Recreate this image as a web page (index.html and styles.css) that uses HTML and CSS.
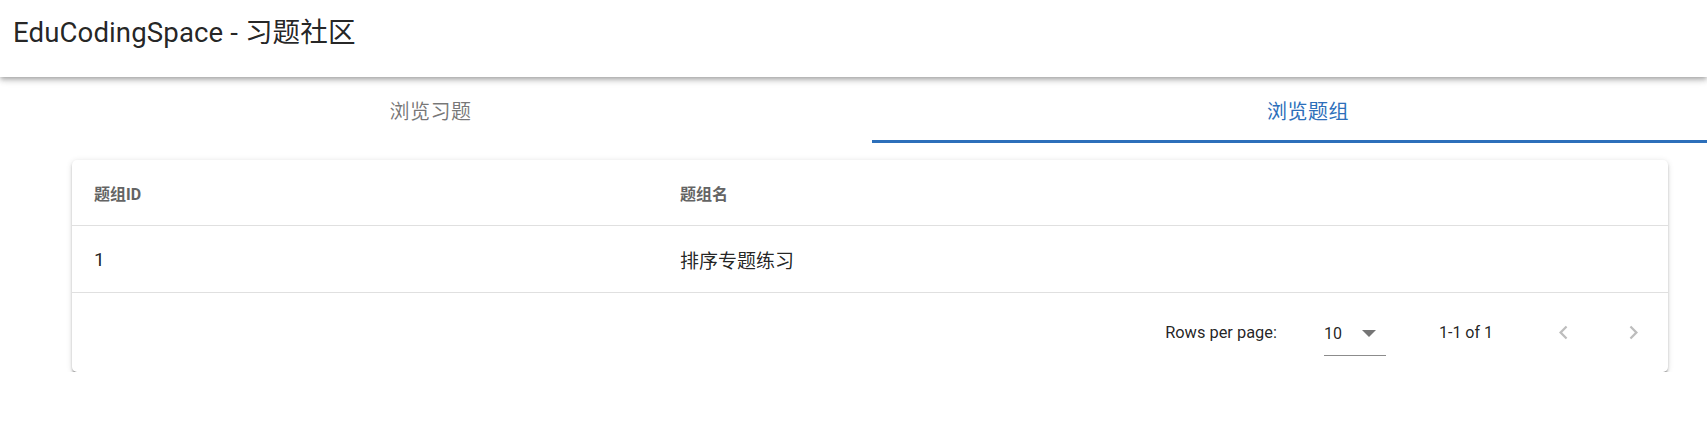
FILE: index.html
```html
<!DOCTYPE html>
<html lang="zh-CN">
<head>
<meta charset="utf-8">
<title>EduCodingSpace - 习题社区</title>
<link rel="stylesheet" href="styles.css">
</head>
<body>
<header class="appbar">
  <h1 class="title">EduCodingSpace - 习题社区</h1>
</header>
<main class="page">
  <nav class="tabs">
    <div class="tab first">浏览习题</div>
    <div class="tab active">浏览题组</div>
  </nav>
  <section class="card">
    <div class="row head">
      <div class="cell c1">题组ID</div>
      <div class="cell c2">题组名</div>
    </div>
    <div class="row body">
      <div class="cell c1">1</div>
      <div class="cell c2">排序专题练习</div>
    </div>
    <div class="footer">
      <span class="label">Rows per page:</span>
      <div class="select">
        <span class="value">10</span>
        <svg class="caret" viewBox="0 0 14 7" width="14" height="7"><path d="M0 0L7 7L14 0Z" fill="currentColor"/></svg>
      </div>
      <span class="range">1-1 of 1</span>
      <button class="nav prev" disabled>
        <svg viewBox="0 0 24 24" width="27" height="27"><path d="M15.41 16.59L10.83 12l4.58-4.59L14 6l-6 6 6 6 1.41-1.41z" fill="currentColor"/></svg>
      </button>
      <button class="nav next" disabled>
        <svg viewBox="0 0 24 24" width="27" height="27"><path d="M8.59 16.59L13.17 12 8.59 7.41 10 6l6 6-6 6-1.41-1.41z" fill="currentColor"/></svg>
      </button>
    </div>
  </section>
</main>
</body>
</html>
```

FILE: styles.css
```css
html, body {
  margin: 0;
  padding: 0;
  background: #ffffff;
  overflow: hidden;
}

body {
  font-family: Roboto, "Noto Sans CJK SC", "Noto Sans", sans-serif;
  color: rgba(0, 0, 0, 0.87);
}

.appbar {
  position: relative;
  z-index: 2;
  box-sizing: border-box;
  height: 77px;
  padding-bottom: 17px;
  display: flex;
  align-items: center;
  background: #ffffff;
  box-shadow: 0 2px 4px -1px rgba(0, 0, 0, 0.2), 0 4px 5px 0 rgba(0, 0, 0, 0.14), 0 1px 10px 0 rgba(0, 0, 0, 0.12);
}

.title {
  margin: 0;
  padding-left: 13px;
  font-size: 27.6px;
  font-weight: 400;
  color: rgba(0, 0, 0, 0.87);
  letter-spacing: 0.1px;
}

.page {
  width: 1744px;
}

.tabs {
  display: grid;
  grid-template-columns: 1fr 1fr;
  height: 66px;
}

.tab {
  display: flex;
  align-items: center;
  justify-content: center;
  font-size: 20px;
  letter-spacing: 0.5px;
  color: rgba(0, 0, 0, 0.54);
}

.tab.first {
  padding-right: 11px;
}

.tab.active {
  color: #2d6fba;
  box-shadow: inset 0 -3px 0 #2d6fba;
}

.card {
  margin: 17px 0 0 72px;
  width: 1596px;
  border-radius: 5px;
  background: #ffffff;
  box-shadow: 0 3px 2px -1px rgba(0, 0, 0, 0.28), 0 2px 3px 0 rgba(0, 0, 0, 0.16), 0 1px 6px 0 rgba(0, 0, 0, 0.12);
}

.row {
  display: flex;
  border-bottom: 1px solid #e0e0e0;
}

.row.head {
  height: 65px;
}

.row.body {
  height: 66px;
}

.cell {
  display: flex;
  align-items: center;
  box-sizing: border-box;
  padding-left: 22px;
}

.c1 {
  width: 586px;
}

.c2 {
  flex: 1;
}

.head .cell {
  font-size: 16px;
  font-weight: 700;
  color: #646464;
}

.body .cell {
  font-size: 19px;
  color: rgba(0, 0, 0, 0.87);
}

.footer {
  height: 79px;
  display: flex;
  align-items: center;
  justify-content: flex-end;
  padding-right: 11px;
  font-size: 16px;
  color: rgba(0, 0, 0, 0.87);
}

.label {
  margin-right: 47px;
  font-size: 16.4px;
}

.select {
  align-self: flex-start;
  margin-top: 18px;
  box-sizing: border-box;
  width: 62px;
  height: 45px;
  display: flex;
  align-items: center;
  border-bottom: 1px solid #8c8c8c;
}

.value {
  font-size: 16px;
}

.caret {
  margin-left: 20px;
  color: #757575;
}

.range {
  margin-left: 53px;
}

.nav {
  width: 48px;
  height: 48px;
  padding: 0;
  border: none;
  background: none;
  display: flex;
  align-items: center;
  justify-content: center;
  color: #bdbdbd;
}

.nav.prev {
  margin-left: 46px;
}

.nav.next {
  margin-left: 22px;
}
```
